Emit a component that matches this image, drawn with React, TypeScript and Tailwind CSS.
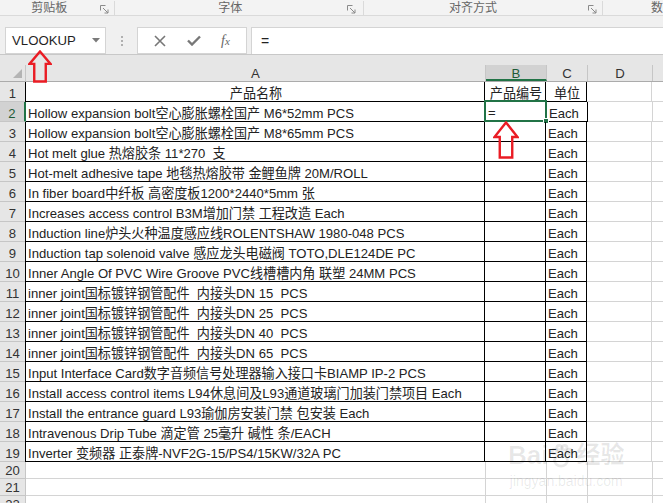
import React from 'react';

const rows: [string, string, string][] = [
  ['产品名称', '产品编号', '单位'],
  ['Hollow expansion bolt空心膨胀螺栓国产 M6*52mm PCS', '=', 'Each'],
  ['Hollow expansion bolt空心膨胀螺栓国产 M8*65mm PCS', '', 'Each'],
  ['Hot melt glue 热熔胶条 11*270  支', '', 'Each'],
  ['Hot-melt adhesive tape 地毯热熔胶带 金鲤鱼牌 20M/ROLL', '', 'Each'],
  ['In fiber board中纤板 高密度板1200*2440*5mm 张', '', 'Each'],
  ['Increases access control B3M增加门禁 工程改造 Each', '', 'Each'],
  ['Induction line炉头火种温度感应线ROLENTSHAW 1980-048 PCS', '', 'Each'],
  ['Induction tap solenoid valve 感应龙头电磁阀 TOTO,DLE124DE PC', '', 'Each'],
  ['Inner Angle Of PVC Wire Groove PVC线槽槽内角 联塑 24MM PCS', '', 'Each'],
  ['inner joint国标镀锌钢管配件  内接头DN 15  PCS', '', 'Each'],
  ['inner joint国标镀锌钢管配件  内接头DN 25  PCS', '', 'Each'],
  ['inner joint国标镀锌钢管配件  内接头DN 40  PCS', '', 'Each'],
  ['inner joint国标镀锌钢管配件  内接头DN 65  PCS', '', 'Each'],
  ['Input Interface Card数字音频信号处理器输入接口卡BIAMP IP-2 PCS', '', 'Each'],
  ['Install access control items L94休息间及L93通道玻璃门加装门禁项目 Each', '', 'Each'],
  ['Install the entrance guard L93瑜伽房安装门禁 包安装 Each', '', 'Each'],
  ['Intravenous Drip Tube 滴定管 25毫升 碱性 条/EACH', '', 'Each'],
  ['Inverter 变频器 正泰牌-NVF2G-15/PS4/15KW/32A PC', '', 'Each'],
];

const font = { fontFamily: '"Liberation Sans", Arial, "Noto Sans CJK SC", sans-serif' };

const Launcher = () => (
  <svg width="9" height="9" viewBox="0 0 9 9" className="text-[#8a8a8a]">
    <path d="M0.5 0.5h5M0.5 0.5v5" stroke="currentColor" fill="none" />
    <path d="M3 3l5 5M8 4.5v3.5h-3.5" stroke="currentColor" fill="none" />
  </svg>
);

const UpArrow = ({ w, h }: { w: number; h: number }) => (
  <svg width={w} height={h} viewBox={`0 0 ${w} ${h}`}>
    <polygon
      points={`${w / 2},1.5 ${w - 1.5},${h * 0.42} ${w * 0.74},${h * 0.42} ${w * 0.74},${h - 1.5} ${w * 0.26},${h - 1.5} ${w * 0.26},${h * 0.42} 1.5,${h * 0.42}`}
      fill="none"
      stroke="#ea1c24"
      strokeWidth="2.4"
      strokeLinejoin="miter"
    />
  </svg>
);

export default function App() {
  const extraRows = [20, 21, 22];
  return (
    <div className="relative w-[663px] h-[503px] overflow-hidden bg-white text-[#222]" style={font}>
      {/* ribbon group labels */}
      <div className="flex h-[16px] bg-[#f3f3f3] border-b border-[#dadada] text-[12px] text-[#666] leading-[14px] pt-[1px]">
        <div className="relative w-[116px] flex items-start justify-center pr-[16px] border-r border-[#dadada]">
          <span>剪贴板</span>
          <span className="absolute right-[5px] top-[4px]"><Launcher /></span>
        </div>
        <div className="relative w-[250px] flex justify-center pr-[18px] border-r border-[#dadada]">
          <span>字体</span>
          <span className="absolute right-[7px] top-[4px]"><Launcher /></span>
        </div>
        <div className="relative w-[240px] flex justify-center pr-[20px] border-r border-[#dadada]">
          <span>对齐方式</span>
          <span className="absolute right-[5px] top-[4px]"><Launcher /></span>
        </div>
        <div className="flex-1 pl-[48px]">数</div>
      </div>

      {/* formula bar */}
      <div className="h-[39px] bg-[#f0f0f0] pt-[11px] flex border-b border-[#c8c8c8]">
        <div className="ml-[5px] w-[101px] h-[27px] bg-white border border-[#d4d4d4] flex items-center pl-[6px] pr-[5px] text-[13.2px] text-[#1f1f1f]">
          <span className="flex-1">VLOOKUP</span>
          <svg width="8" height="5" viewBox="0 0 8 5"><path d="M0 0h8L4 4.5z" fill="#7a7a7a" /></svg>
        </div>
        <div className="w-[31px] flex flex-col items-center justify-center gap-[2px]">
          <span className="w-[2px] h-[2px] bg-[#b0b0b0]" />
          <span className="w-[2px] h-[2px] bg-[#b0b0b0]" />
          <span className="w-[2px] h-[2px] bg-[#b0b0b0]" />
        </div>
        <div className="w-[110px] h-[27px] bg-white border border-[#d4d4d4] flex items-center justify-around px-[6px] text-[#777]">
          <svg width="12" height="12" viewBox="0 0 12 12"><path d="M1 1l10 10M11 1L1 11" stroke="#777" strokeWidth="1.6" /></svg>
          <svg width="14" height="11" viewBox="0 0 14 11"><path d="M1 5.5l4 4L13 1.5" stroke="#777" strokeWidth="2.4" fill="none" /></svg>
          <span className="italic text-[14px] text-[#666]" style={{ fontFamily: '"Liberation Serif", serif' }}>
            f<span className="text-[11px]">x</span>
          </span>
        </div>
        <div className="ml-[4px] flex-1 h-[27px] bg-white border-t border-l border-[#d4d4d4] flex items-center pl-[9px] text-[14px] text-[#222]">
          =
        </div>
      </div>

      {/* gap above headers */}
      <div className="h-[10px] bg-[#e6e6e6]" />

      {/* column headers */}
      <div className="flex h-[17px] bg-[#e6e6e6] text-[13.2px] text-[#333] leading-[18px] border-b border-[#ababab]">
        <div className="relative w-[26px] border-r border-[#c6c6c6]">
          <svg className="absolute right-[3px] bottom-[3px]" width="9" height="9" viewBox="0 0 9 9"><path d="M9 0v9H0z" fill="#b4b4b4" /></svg>
        </div>
        <div className="w-[460px] text-center border-r border-[#c6c6c6]">A</div>
        <div className="w-[61px] text-center bg-[#d2d2d2] text-[#1e5b37] border-r border-[#c6c6c6] border-b-2 border-b-[#217346]">B</div>
        <div className="w-[41px] text-center border-r border-[#c6c6c6]">C</div>
        <div className="w-[65px] text-center border-r border-[#c6c6c6]">D</div>
        <div className="flex-1" />
      </div>

      {/* rows */}
      {rows.map((r, i) => {
        const n = i + 1;
        const sel = n === 2;
        return (
          <div key={n} className="flex h-[20px] text-[13.1px] leading-[21px] pt-[1px]">
            <div
              className={`w-[26px] -mt-[1px] pt-[1px] text-center border-b border-[#c6c6c6] ${
                sel ? 'bg-[#d2d2d2] text-[#1e5b37] border-r-2 border-r-[#217346]' : 'bg-[#e6e6e6] text-[#333] border-r border-r-[#c6c6c6]'
              }`}
            >
              {n}
            </div>
            <div
              className={`w-[460px] -mt-[1px] pt-[1px] border-r border-b border-black whitespace-pre pl-[2px] overflow-visible ${
                n === 1 ? 'text-center' : ''
              } ${sel ? 'border-l-0' : 'border-l border-l-black -ml-[1px]'}`}
            >
              {r[0]}
            </div>
            <div className="relative w-[61px] -mt-[1px] pt-[1px] border-r border-b border-black whitespace-pre pl-[2px] text-center">
              {n === 1 ? r[1] : ''}
              {sel && (
                <div className="absolute -left-[2px] -top-[2px] w-[63px] h-[22px] border-2 border-[#217346] text-left pl-[2px] pt-[1px] leading-[19px]">
                  =
                  <span className="absolute -right-[4px] -bottom-[4px] w-[6px] h-[6px] bg-[#217346] border border-white" />
                </div>
              )}
            </div>
            <div className={`w-[41px] -mt-[1px] pt-[1px] border-r border-b border-black whitespace-pre pl-[2px] ${n === 1 ? 'text-center' : ''}`}>
              {r[2]}
            </div>
            <div className="w-[65px] -mt-[1px] border-r border-b border-[#d4d4d4]" />
            <div className="flex-1 -mt-[1px] border-b border-[#d4d4d4]" />
          </div>
        );
      })}
      {extraRows.map((n) => (
        <div key={n} className="flex h-[17px] text-[13.1px] leading-[18px]">
          <div className="w-[26px] text-center bg-[#e6e6e6] text-[#333] border-r border-b border-[#c6c6c6]">{n}</div>
          <div className="w-[460px] border-r border-b border-[#d4d4d4]" />
          <div className="w-[61px] border-r border-b border-[#d4d4d4]" />
          <div className="w-[41px] border-r border-b border-[#d4d4d4]" />
          <div className="w-[65px] border-r border-b border-[#d4d4d4]" />
          <div className="flex-1 border-b border-[#d4d4d4]" />
        </div>
      ))}

      {/* annotations */}
      <div className="absolute left-[28px] top-[50px]"><UpArrow w={24} h={33} /></div>
      <div className="absolute left-[493px] top-[121px]"><UpArrow w={26} h={38} /></div>

      {/* watermark */}
      <div className="absolute left-[508px] top-[442px] flex flex-col items-center pointer-events-none text-[#000]/[0.09]">
        <div className="flex items-end text-[26px] font-bold leading-[26px]" style={{ fontFamily: '"Liberation Sans", "Noto Sans CJK SC", sans-serif' }}>
          <span>Bai</span>
          <svg width="24" height="24" viewBox="0 0 26 26" className="mx-[1px]">
            <g fill="none" stroke="currentColor" strokeWidth="3">
              <ellipse cx="13" cy="18" rx="7" ry="6" />
              <circle cx="6" cy="8" r="2.5" />
              <circle cx="11" cy="4" r="2.5" />
              <circle cx="17" cy="4" r="2.5" />
              <circle cx="22" cy="8" r="2.5" />
            </g>
          </svg>
          <span className="text-[24px] ml-[2px]">经验</span>
        </div>
        <div className="text-[14px] leading-[16px] mt-[5px]">jingyan.baidu.com</div>
      </div>
    </div>
  );
}
